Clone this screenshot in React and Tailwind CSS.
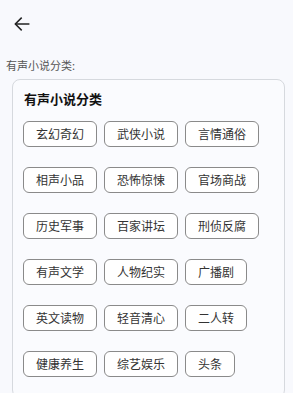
import React from "react";

const cats = [
  "玄幻奇幻", "武侠小说", "言情通俗",
  "相声小品", "恐怖惊悚", "官场商战",
  "历史军事", "百家讲坛", "刑侦反腐",
  "有声文学", "人物纪实", "广播剧",
  "英文读物", "轻音清心", "二人转",
  "健康养生", "综艺娱乐", "头条",
];

export default function App() {
  return (
    <div
      className="w-[293px] h-[393px] overflow-hidden bg-[#f8f9fd]"
      style={{ fontFamily: '"Noto Sans CJK SC", "Noto Sans", sans-serif' }}
    >
      <div className="h-[48px] flex items-center pl-[12px]">
        <svg width="20" height="20" viewBox="0 0 24 24" fill="none" stroke="#222" strokeWidth="1.8" strokeLinecap="square">
          <path d="M20 12H4.5" />
          <path d="M11 5l-7 7 7 7" />
        </svg>
      </div>
      <div className="pl-[6px] pt-[9px] text-[11px] leading-[16px] text-[#555]">有声小说分类:</div>
      <div className="ml-[12px] mr-[8px] mt-[6px] rounded-[8px] border border-[#d6d9de] bg-[#fafbfe] pl-[10px] pt-[9px] pb-[20px]">
        <div className="pl-[1px] text-[13px] leading-[20px] font-bold text-[#111]">有声小说分类</div>
        <div className="mt-[12px] flex flex-wrap gap-x-[7px] gap-y-[20px] w-[240px]">
          {cats.map((c) => (
            <div
              key={c}
              className="h-[26px] px-[12px] flex items-center rounded-[6px] border border-[#8a8a8a] bg-white text-[12px] text-[#333]"
            >
              {c}
            </div>
          ))}
        </div>
      </div>
    </div>
  );
}
